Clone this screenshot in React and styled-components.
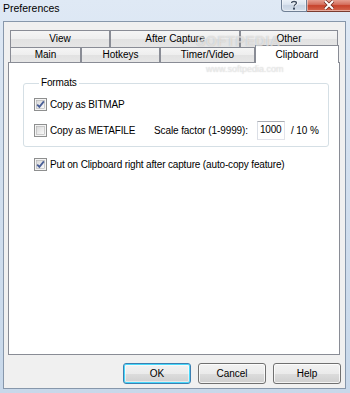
import React from 'react';
import styled, { createGlobalStyle } from 'styled-components';

const GlobalStyle = createGlobalStyle`
  html, body {
    margin: 0;
    padding: 0;
  }
  body {
    font-family: "Liberation Sans", Arial, sans-serif;
    font-size: 10px;
    color: #000;
  }
`;

const Window = styled.div`
  position: relative;
  width: 350px;
  height: 393px;
  overflow: hidden;
  display: flex;
  flex-direction: column;
  background: linear-gradient(180deg, #dfe9f5 0%, #d3e0ef 40%, #c8d8ea 100%);
`;

const TitleBar = styled.div`
  height: 21px;
  flex: none;
  display: flex;
  justify-content: space-between;
  align-items: flex-start;
`;

const Title = styled.div`
  padding: 2px 0 0 3px;
  font-size: 10.5px;
  line-height: 12px;
  color: #000;
`;

const CaptionButtons = styled.div`
  display: flex;
  margin-top: -1px;
  margin-right: -2px;
`;

const CaptionButton = styled.div`
  height: 12px;
  width: ${p => p.$w}px;
  display: flex;
  align-items: center;
  justify-content: center;
  border: 1px solid ${p => (p.$close ? '#7a3b30' : '#6f7f94')};
  border-top: none;
  border-radius: ${p => (p.$close ? '0' : '0 0 0 4px')};
  border-left: ${p => (p.$close ? 'none' : '1px solid #6f7f94')};
  background: ${p => (p.$close
    ? 'linear-gradient(180deg, #e9a99b 0%, #d5715f 45%, #c7432c 55%, #d5684f 100%)'
    : 'linear-gradient(180deg, #eef3f9 0%, #dbe4ef 45%, #c8d4e3 55%, #d6e0ec 100%)')};
  box-shadow: inset 0 0 0 1px rgba(255, 255, 255, 0.45);
`;

const Client = styled.div`
  flex: 1;
  margin: 0 4px 4px 3px;
  border: 1px solid #8797ab;
  background: #f0f0f0;
  display: flex;
  flex-direction: column;
  padding: 8px 4px 0 4px;
`;

const TabStrip = styled.div`
  padding-left: 2px;
  display: flex;
  flex-direction: column;
`;

const TabRow = styled.div`
  display: flex;
  align-items: flex-end;
  height: ${p => p.$h}px;
`;

const Tab = styled.div`
  position: relative;
  box-sizing: border-box;
  width: ${p => p.$w}px;
  height: ${p => (p.$active ? p.$h + 3 : p.$h)}px;
  margin-bottom: ${p => (p.$active ? -1 : 0)}px;
  z-index: ${p => (p.$active ? 2 : 1)};
  border: 1px solid #898c95;
  border-bottom: none;
  background: ${p => (p.$active
    ? '#ffffff'
    : 'linear-gradient(180deg, #f5f5f5 0%, #eeeeee 50%, #e2e2e2 51%, #e6e6e6 100%)')};
  display: flex;
  justify-content: center;
  align-items: ${p => (p.$active ? 'flex-start' : 'center')};
  padding-top: ${p => (p.$active ? 3 : 0)}px;
  font-size: 10px;
  line-height: 12px;
  white-space: nowrap;
`;

const Panel = styled.div`
  box-sizing: border-box;
  width: 332px;
  height: 293px;
  border: 1px solid #898c95;
  background: #ffffff;
  padding: 14px 0 0 14px;
  display: flex;
  flex-direction: column;
`;

const Group = styled.fieldset`
  box-sizing: border-box;
  margin: 0;
  width: 306px;
  height: 70px;
  padding: 0 0 0 10px;
  border: 1px solid #d5dfe5;
  border-radius: 3px;
  display: flex;
  flex-direction: column;
`;

const Legend = styled.legend`
  margin-left: 5px;
  padding: 0 2px;
  font-size: 10px;
  letter-spacing: -0.15px;
  line-height: 12px;
`;

const Row = styled.div`
  display: flex;
  align-items: center;
  height: ${p => p.$h}px;
  margin-top: ${p => p.$mt}px;
  margin-left: ${p => p.$ml || 0}px;
`;

const CheckLabel = styled.label`
  display: flex;
  align-items: center;
  width: ${p => (p.$w ? `${p.$w}px` : 'auto')};
  font-size: 10px;
  letter-spacing: -0.15px;
  line-height: 12px;
  white-space: nowrap;
`;

const CheckText = styled.span`
  margin-left: 3px;
`;

const Text = styled.span`
  font-size: 10px;
  letter-spacing: -0.1px;
  line-height: 12px;
  white-space: nowrap;
  width: ${p => (p.$w ? `${p.$w}px` : 'auto')};
  margin-left: ${p => p.$ml || 0}px;
`;

const NumberBox = styled.div`
  box-sizing: border-box;
  width: 28px;
  height: 19px;
  border: 1px solid #e2e3ea;
  border-top-color: #abadb3;
  border-left-color: #dbdfe6;
  background: #fff;
  font-size: 10px;
  letter-spacing: -0.2px;
  line-height: 15px;
  padding: 0 0 0 2px;
`;

const ButtonBar = styled.div`
  display: flex;
  justify-content: flex-end;
  gap: 7px;
  margin-top: 8px;
`;

const Button = styled.div`
  box-sizing: border-box;
  width: 68px;
  height: 21px;
  border-radius: 3px;
  border: 1px solid ${p => (p.$default ? '#3c7fb1' : '#707070')};
  background: linear-gradient(180deg, #f2f2f2 0%, #ebebeb 50%, #dddddd 51%, #cfcfcf 100%);
  box-shadow: ${p => (p.$default
    ? 'inset 0 0 0 1px #48d8fb, inset 0 0 0 2px rgba(255,255,255,0.5)'
    : 'inset 0 0 0 1px rgba(255,255,255,0.75)')};
  display: flex;
  align-items: center;
  justify-content: center;
  font-size: 10px;
  line-height: 12px;
`;

const Watermark = styled.div`
  position: absolute;
  left: ${p => p.$x}px;
  top: ${p => p.$y}px;
  font-size: ${p => p.$size}px;
  font-weight: ${p => (p.$bold ? 700 : 400)};
  letter-spacing: ${p => p.$ls || 0}px;
  color: rgba(255, 255, 255, 0.55);
  text-shadow: 0 0 1px rgba(120, 120, 120, 0.45);
  pointer-events: none;
  z-index: 5;
  white-space: nowrap;
`;

const CheckBox = ({ checked }) => (
  <svg width="13" height="13" viewBox="0 0 13 13">
    <defs>
      <linearGradient id="cbg" x1="0" y1="0" x2="1" y2="1">
        <stop offset="0" stopColor="#d8d8d8" />
        <stop offset="1" stopColor="#fbfbfb" />
      </linearGradient>
    </defs>
    <rect x="0.5" y="0.5" width="12" height="12" fill="#f4f4f4" stroke="#8e8f8f" />
    <rect x="2.5" y="2.5" width="8" height="8" fill="url(#cbg)" stroke="#b0b0b0" strokeWidth="0.6" />
    {checked && (
      <path d="M3.2 6.6 L5.4 8.9 L9.9 3.4" fill="none" stroke="#4a5f97" strokeWidth="1.8" />
    )}
  </svg>
);

const HelpGlyph = () => (
  <svg width="8" height="10" viewBox="0 0 8 10">
    <path d="M1.5 3 C1.5 1 6.5 1 6.5 3 C6.5 4.6 4 4.6 4 6.5" fill="none" stroke="#ffffff" strokeWidth="2.6" />
    <path d="M1.5 3 C1.5 1 6.5 1 6.5 3 C6.5 4.6 4 4.6 4 6.5" fill="none" stroke="#3f4d60" strokeWidth="1.3" />
    <rect x="3" y="7.6" width="2" height="2" fill="#3f4d60" />
  </svg>
);

const CloseGlyph = () => (
  <svg width="12" height="10" viewBox="0 0 12 10">
    <path d="M2 1 L10 9 M10 1 L2 9" stroke="#6b2a20" strokeWidth="3.4" />
    <path d="M2 1 L10 9 M10 1 L2 9" stroke="#ffffff" strokeWidth="2" />
  </svg>
);

const backTabs = [
  { label: 'View', w: 100 },
  { label: 'After Capture', w: 130 },
  { label: 'Other', w: 98 },
];

const frontTabs = [
  { label: 'Main', w: 71 },
  { label: 'Hotkeys', w: 79 },
  { label: 'Timer/Video', w: 95 },
  { label: 'Clipboard', w: 84, active: true },
];

const App = () => (
  <Window>
    <GlobalStyle />
    <TitleBar>
      <Title>Preferences</Title>
      <CaptionButtons>
        <CaptionButton $w={24}><HelpGlyph /></CaptionButton>
        <CaptionButton $w={44} $close><CloseGlyph /></CaptionButton>
      </CaptionButtons>
    </TitleBar>

    <Client>
      <TabStrip>
        <TabRow $h={17}>
          {backTabs.map(t => (
            <Tab key={t.label} $w={t.w} $h={17}>{t.label}</Tab>
          ))}
        </TabRow>
        <TabRow $h={15}>
          {frontTabs.map(t => (
            <Tab key={t.label} $w={t.w} $h={15} $active={t.active}>{t.label}</Tab>
          ))}
        </TabRow>
      </TabStrip>

      <Panel>
        <Group>
          <Legend>Formats</Legend>
          <Row $h={13} $mt={9}>
            <CheckLabel>
              <CheckBox checked />
              <CheckText>Copy as BITMAP</CheckText>
            </CheckLabel>
          </Row>
          <Row $h={19} $mt={10}>
            <CheckLabel $w={120}>
              <CheckBox />
              <CheckText>Copy as METAFILE</CheckText>
            </CheckLabel>
            <Text $w={103}>Scale factor (1-9999):</Text>
            <NumberBox>1000</NumberBox>
            <Text $ml={6}>/ 10 %</Text>
          </Row>
        </Group>
        <Row $h={13} $mt={11} $ml={11}>
          <CheckLabel>
            <CheckBox checked />
            <CheckText>Put on Clipboard right after capture (auto-copy feature)</CheckText>
          </CheckLabel>
        </Row>
      </Panel>

      <ButtonBar>
        <Button $default>OK</Button>
        <Button>Cancel</Button>
        <Button>Help</Button>
      </ButtonBar>
    </Client>

    <Watermark $x={196} $y={33} $size={14} $bold $ls={0.5}>SOFTPEDIA</Watermark>
    <Watermark $x={206} $y={64} $size={9}>www.softpedia.com</Watermark>
  </Window>
);

export default App;
